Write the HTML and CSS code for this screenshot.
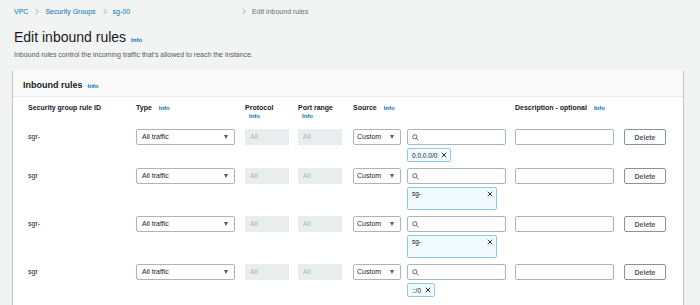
FILE: index.html
```html
<!DOCTYPE html>
<html lang="en">
<head>
    <meta charset="utf-8">
    <title>Edit inbound rules</title>
    <link rel="stylesheet" href="styles.css">
</head>
<body>
    <nav class="crumbs">
        <a class="crumb" href="#">VPC</a>
        <svg class="chev" viewBox="0 0 6 10"><path d="M1 1l4 4-4 4"/></svg>
        <a class="crumb" href="#">Security Groups</a>
        <svg class="chev" viewBox="0 0 6 10"><path d="M1 1l4 4-4 4"/></svg>
        <a class="crumb" href="#">sg-00</a>
        <svg class="chev chev-far" viewBox="0 0 6 10"><path d="M1 1l4 4-4 4"/></svg>
        <span class="crumb-current">Edit inbound rules</span>
    </nav>

    <div class="title-row">
        <h1>Edit inbound rules</h1>
        <a class="info" href="#">Info</a>
    </div>
    <p class="lead">Inbound rules control the incoming traffic that's allowed to reach the instance.</p>

    <section class="card">
        <header class="card-head">
            <h2>Inbound rules</h2>
            <a class="info" href="#">Info</a>
        </header>
        <div class="rules">
            <div class="rule rule-head">
                <div class="th">Security group rule ID</div>
                <div class="th">Type <a class="info" href="#">Info</a></div>
                <div class="th">Protocol<a class="info info-below" href="#">Info</a></div>
                <div class="th">Port range<a class="info info-below" href="#">Info</a></div>
                <div class="th">Source <a class="info" href="#">Info</a></div>
                <div class="th"></div>
                <div class="th">Description - optional <a class="info" href="#">Info</a></div>
                <div class="th"></div>
            </div>

            <div class="rule">
                <div class="rule-id">sgr-</div>
                <div class="select type-select">All traffic<span class="caret"></span></div>
                <div class="field-off">All</div>
                <div class="field-off">All</div>
                <div class="select source-select">Custom<span class="caret"></span></div>
                <div class="source-col">
                    <div class="search"><svg class="mag" viewBox="0 0 10 10"><circle cx="4" cy="4" r="3"/><path d="M6.2 6.2L9 9"/></svg></div>
                    <div class="token">0.0.0.0/0<svg class="x" viewBox="0 0 8 8"><path d="M1 1l6 6M7 1L1 7"/></svg></div>
                </div>
                <div class="desc"></div>
                <button class="btn">Delete</button>
            </div>

            <div class="rule">
                <div class="rule-id">sgr</div>
                <div class="select type-select">All traffic<span class="caret"></span></div>
                <div class="field-off">All</div>
                <div class="field-off">All</div>
                <div class="select source-select">Custom<span class="caret"></span></div>
                <div class="source-col">
                    <div class="search"><svg class="mag" viewBox="0 0 10 10"><circle cx="4" cy="4" r="3"/><path d="M6.2 6.2L9 9"/></svg></div>
                    <div class="token token-big">sg-<svg class="x" viewBox="0 0 8 8"><path d="M1 1l6 6M7 1L1 7"/></svg></div>
                </div>
                <div class="desc"></div>
                <button class="btn">Delete</button>
            </div>

            <div class="rule">
                <div class="rule-id">sgr-</div>
                <div class="select type-select">All traffic<span class="caret"></span></div>
                <div class="field-off">All</div>
                <div class="field-off">All</div>
                <div class="select source-select">Custom<span class="caret"></span></div>
                <div class="source-col">
                    <div class="search"><svg class="mag" viewBox="0 0 10 10"><circle cx="4" cy="4" r="3"/><path d="M6.2 6.2L9 9"/></svg></div>
                    <div class="token token-big">sg-<svg class="x" viewBox="0 0 8 8"><path d="M1 1l6 6M7 1L1 7"/></svg></div>
                </div>
                <div class="desc"></div>
                <button class="btn">Delete</button>
            </div>

            <div class="rule">
                <div class="rule-id">sgr</div>
                <div class="select type-select">All traffic<span class="caret"></span></div>
                <div class="field-off">All</div>
                <div class="field-off">All</div>
                <div class="select source-select">Custom<span class="caret"></span></div>
                <div class="source-col">
                    <div class="search"><svg class="mag" viewBox="0 0 10 10"><circle cx="4" cy="4" r="3"/><path d="M6.2 6.2L9 9"/></svg></div>
                    <div class="token">::/0<svg class="x" viewBox="0 0 8 8"><path d="M1 1l6 6M7 1L1 7"/></svg></div>
                </div>
                <div class="desc"></div>
                <button class="btn">Delete</button>
            </div>
        </div>
    </section>
</body>
</html>
```

FILE: styles.css
```css
body {
    margin: 0;
    padding: 5px 17px 0 13px;
    background-color: #f2f3f3;
    font-family: "Liberation Sans", Arial, sans-serif;
    color: #16191f;
    font-size: 7px;
    overflow: hidden;
}

a {
    text-decoration: none;
}

.crumbs {
    display: flex;
    align-items: center;
    height: 12px;
    padding-left: 1px;
}

.crumb {
    color: #0073bb;
}

.crumb-current {
    color: #687078;
}

.chev {
    width: 4px;
    height: 7px;
    margin: 0 6px 0 7px;
    fill: none;
    stroke: #879596;
    stroke-width: 1.2;
}

.chev-far {
    margin-left: 112px;
}

.title-row {
    display: flex;
    align-items: baseline;
    margin-top: 12px;
    padding-left: 1px;
}

h1 {
    margin: 0;
    font-size: 14px;
    font-weight: normal;
    line-height: 16px;
}

.info {
    color: #0073bb;
    font-size: 6px;
    font-weight: bold;
    margin-left: 5px;
}

.lead {
    margin: 5px 0 0 1px;
    color: #545b64;
    line-height: 10px;
}

.card {
    margin-top: 10px;
    height: 300px;
    background-color: #fff;
    box-shadow: 0 1px 1px 0 rgba(0, 28, 36, 0.3), 1px 1px 1px 0 rgba(0, 28, 36, 0.15), -1px 1px 1px 0 rgba(0, 28, 36, 0.15);
}

.card-head {
    display: flex;
    align-items: baseline;
    height: 26px;
    padding: 0 10px;
    line-height: 30px;
    background-color: #fafafa;
    border-bottom: 1px solid #eaeded;
}

.card-head h2 {
    margin: 0;
    font-size: 9px;
    font-weight: bold;
}

.rules {
    padding: 6px 0 0 15px;
}

.rule {
    display: grid;
    grid-template-columns: 108px 109px 53px 55px 54px 108px 109px 41px;
    align-items: start;
    margin-bottom: 6px;
}

.rule-head {
    height: 20px;
    margin-bottom: 6px;
}

.th {
    font-weight: bold;
    line-height: 9px;
}

.info-below {
    display: block;
    margin-left: 4px;
}

.rule-id {
    line-height: 14px;
    padding-top: 1px;
}

.select {
    position: relative;
    height: 14px;
    line-height: 14px;
    padding-left: 5px;
    background: #fff;
    border: 1px solid #aab7b8;
    border-radius: 2px;
    box-sizing: content-box;
}

.type-select {
    width: 92px;
}

.source-select {
    width: 43px;
    padding-left: 3px;
}

.caret {
    position: absolute;
    right: 6px;
    top: 5px;
    border-left: 2.5px solid transparent;
    border-right: 2.5px solid transparent;
    border-top: 4px solid #545b64;
}

.source-select .caret {
    right: 6px;
}

.field-off {
    width: 39px;
    height: 16px;
    line-height: 16px;
    padding-left: 5px;
    background-color: #eaeded;
    color: #aab7b8;
}

.search,
.desc {
    width: 97px;
    height: 14px;
    border: 1px solid #aab7b8;
    border-radius: 2px;
    background: #fff;
}

.search {
    display: flex;
    align-items: center;
    padding-left: 4px;
    width: 93px;
}

.mag {
    width: 7px;
    height: 7px;
    fill: none;
    stroke: #545b64;
    stroke-width: 1.3;
}

.token {
    display: inline-flex;
    align-items: center;
    margin-top: 3px;
    height: 12px;
    padding: 0 3px 0 4px;
    background-color: #f1faff;
    border: 1px solid #8dcbe6;
    border-radius: 2px;
    color: #16191f;
    font-size: 6.5px;
}

.token-big {
    display: flex;
    align-items: flex-start;
    justify-content: space-between;
    width: 81px;
    height: 19px;
    padding-top: 2px;
}

.x {
    width: 6px;
    height: 6px;
    margin-left: 4px;
    fill: none;
    stroke: #16191f;
    stroke-width: 1.2;
}

.token-big .x {
    margin-top: 1px;
}

.btn {
    width: 42px;
    height: 16px;
    padding: 0;
    background: #fff;
    border: 1px solid #879596;
    border-radius: 2px;
    color: #545b64;
    font-family: inherit;
    font-size: 7px;
    font-weight: bold;
}
```
